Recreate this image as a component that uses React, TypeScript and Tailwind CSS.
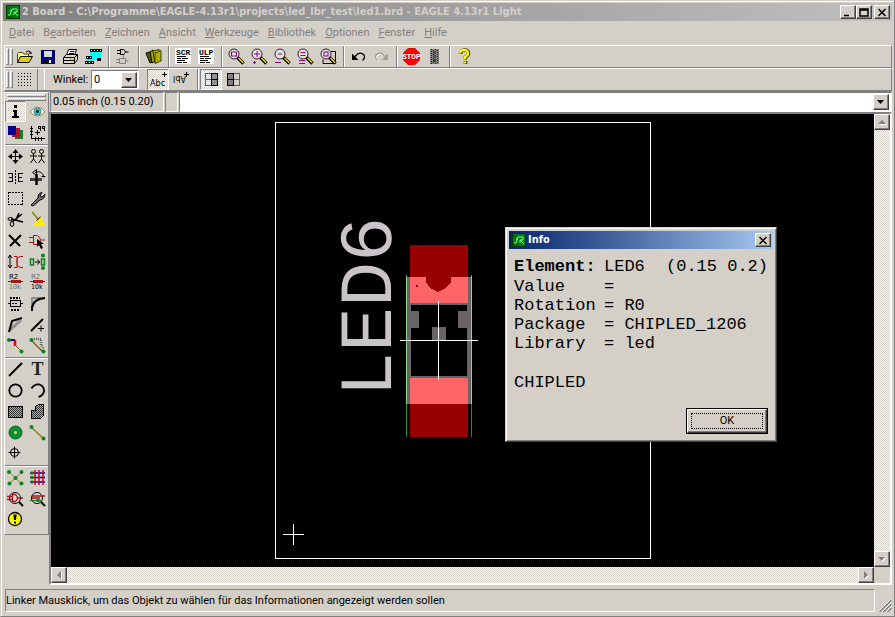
import type { ReactNode } from "react";

const RAISED =
  "bg-[#d4d0c8] border border-t-white border-l-white border-b-[#404040] border-r-[#404040] shadow-[inset_-1px_-1px_0_#808080]";
const DITHER =
  "bg-[repeating-conic-gradient(#ffffff_0_25%,#d4d0c8_0_50%)] bg-[length:2px_2px]";

function Icon({ children, smooth }: { children: ReactNode; smooth?: boolean }) {
  return (
    <svg
      width="17"
      height="17"
      viewBox="0 0 17 17"
      fill="none"
      stroke="#000"
      shapeRendering={smooth ? "auto" : "crispEdges"}
      aria-hidden="true"
      className="shrink-0 overflow-visible"
    >
      {children}
    </svg>
  );
}

function Logo() {
  return (
    <svg width="14" height="14" viewBox="0 0 14 14" aria-hidden="true" className="shrink-0">
      <rect width="14" height="14" fill="#003c00" />
      <rect x="1" y="1" width="12" height="12" fill="#007a18" />
      <path d="M2 10h2l2-6M4 6h2M6 4h5v3H8l4 4M8 7v3" stroke="#7dff7d" fill="none" />
      <path d="M1 12h6M1 3h3" stroke="#004d00" />
    </svg>
  );
}

/* ---------- magnifier family ---------- */
function Lens({ children }: { children?: ReactNode }) {
  return (
    <Icon smooth>
      <circle cx="6" cy="6" r="5" stroke="#302030" fill="#e6e2e0" />
      {children}
      <path d="M9.500 9.500l6 6" stroke="#000" strokeWidth="3.400" />
      <path d="M10.500 10l4.700 4.700" stroke="#f0e000" strokeWidth="1.500" />
    </Icon>
  );
}

const folder = (
  <Icon smooth>
    <path d="M1.500 14V5.500l1-1h4l1 1.500h5V8.500" fill="#ffff9c" stroke="#504800" />
    <path d="M1.500 14.500l3-6h12l-3.500 6z" fill="#e0d000" />
    <path d="M10 4q2.500-2.500 5 0.500v1.500M13 5h2.500" />
  </Icon>
);
const disk = (
  <Icon>
    <rect x="2.500" y="2.500" width="13" height="13" fill="#0000a0" stroke="#000040" />
    <rect x="5" y="3" width="8" height="6" fill="#d8d8d8" stroke="none" />
    <rect x="5" y="11" width="8" height="5" fill="#101010" stroke="none" />
    <rect x="10" y="12" width="2" height="3" fill="#fff" stroke="none" />
  </Icon>
);
const printer = (
  <Icon smooth>
    <path d="M4.500 7.500l2-6h8l-2 6" fill="#fff" />
    <path d="M1.500 9.500l3-3h11v5l-3 4h-11z" fill="#d8d8d8" />
    <path d="M1.500 9.500h11v6M12.500 9.500l3-3M2 12.500h10M8 3.500h4.500M7 5.500h5" />
    <path d="M7 11h4" stroke="#e0c000" />
  </Icon>
);
const boardSwitch = (
  <Icon>
    <path d="M5 2h11v7H9v7H2V8h3z" fill="#00ffff" stroke="none" />
    <rect x="5" y="4" width="11" height="8" fill="#00ffff" stroke="none" />
    <path d="M5 2.500h12M0 14.500h9" strokeWidth="3" />
    <path d="M1 9.500h6M12 11.500h4" strokeWidth="3" />
    <path d="M6 2.500h10M1 14.500h8M2 9.500h4" stroke="#fff" strokeDasharray="1 2" />
  </Icon>
);
const gates = (
  <Icon smooth>
    <path d="M5.500 1.500h3q4 2.500 0 5h-3zM2 2.500h3M2 5.500h3M10.500 4h3" />
    <path d="M4.500 10.500h6v5h-6zM1 11.500h3M1 14.500h3M10.500 13h3" stroke="#808080" />
    <path d="M8.500 7v3" stroke="#808080" />
  </Icon>
);
const books = (
  <Icon smooth>
    <path d="M1 5l4-1 3 10-3 1z" fill="#606000" />
    <path d="M5 4l3-2 2 11-3 2z" fill="#a0a000" />
    <path d="M8 3l6-1.500 2 1.500v10l-6 2.500z" fill="#b0ac00" stroke="#404000" />
    <path d="M10 5v10M10 5l5-2" stroke="#404000" />
  </Icon>
);

function Sheet({ label }: { label: string }) {
  return (
    <Icon>
      <rect x="0" y="0" width="16" height="16" fill="#fff" stroke="none" />
      <text x="1" y="7" fontSize="8" fontWeight="bold" fill="#000" stroke="none" fontFamily="Liberation Mono, monospace">
        {label}
      </text>
      <path d="M2 8.500h9M2 10.500h4M7 10.500h6M2 12.500h8M2 14.500h5M8 14.500h4" />
    </Icon>
  );
}

const undo = (
  <Icon smooth>
    <path d="M5 8.500q5-6 9-1.500q1.500 3-1.500 5.500" strokeWidth="1.300" />
    <path d="M2 5.500v6.500h6.500z" fill="#000" stroke="none" />
  </Icon>
);
const redo = (
  <Icon smooth>
    <path d="M13 9.500q-5-6-9-1.500q-1.500 3 1.500 5.500" stroke="#fff" strokeWidth="1.300" />
    <path d="M12 8.500q-5-6-9-1.500q-1.500 3 1.500 5.500" stroke="#a09c98" strokeWidth="1.300" />
    <path d="M15 5.500v6.500H8.500z" fill="#a09c98" stroke="none" />
  </Icon>
);
const stop = (
  <Icon smooth>
    <path d="M5 0h7l5 5v7l-5 5H5l-5-5V5z" fill="#f80000" stroke="none" />
    <text x="8.500" y="11" textAnchor="middle" fontSize="7" fontWeight="bold" fill="#fff" stroke="none" fontFamily="Roboto, sans-serif">
      STOP
    </text>
  </Icon>
);
const traffic = (
  <Icon>
    <rect x="4" y="1" width="9" height="15" fill="#808080" stroke="none" />
    <path d="M5.500 1v15M7.500 2v14M9.500 1v15M11.500 2v14" stroke="#202020" strokeDasharray="1 1" />
    <path d="M7 4.500h3M7 8.500h3" stroke="#505050" strokeWidth="3" />
    <path d="M7 12.500h3" stroke="#106010" strokeWidth="3" />
  </Icon>
);
const help = (
  <Icon smooth>
    <path d="M4.500 6q0-4 4-4t4 3.500q0 2-3 3.500v2.500M9.500 13v3" stroke="#404000" strokeWidth="3.600" />
    <path d="M4 5.500q0-3.500 4-3.500t4 3.500q0 2-3 3.500v2M9 13.500v2" stroke="#ffff00" strokeWidth="2.400" />
  </Icon>
);

const fileTools: [string, ReactNode][][] = [
  [["Öffnen", folder], ["Speichern", disk], ["Drucken", printer], ["CAM", boardSwitch]],
  [["Schaltplan", gates]],
  [["Bibliothek", books]],
  [["Skript", <Sheet label="SCR" />], ["ULP", <Sheet label="ULP" />]],
  [
    ["Einpassen", <Lens><rect x="3.500" y="4" width="5" height="4" stroke="#800080" fill="none" /></Lens>],
    ["Vergrößern", <Lens><path d="M6 3v6M3 6h6M2 14.500h3M3.500 13v3" stroke="#a00090" /></Lens>],
    ["Verkleinern", <Lens><path d="M4 6h4M1 14.500h6" stroke="#800080" /></Lens>],
    ["Neu zeichnen", <Lens><path d="M3.500 4.500h5M3.500 7.500h5M2 12.500h6M2 15.500h6" stroke="#a00070" /></Lens>],
    ["Auswahl", <Lens><path d="M11 3.500h4.500v12H3v-4" stroke="#000" /><rect x="4" y="4" width="4" height="4" stroke="#800080" fill="none" /></Lens>],
  ],
  [["Rückgängig", undo], ["Wiederherstellen", redo]],
  [["Stopp", stop], ["Ausführen", traffic]],
  [["Hilfe", help]],
];

/* ---------- tool palette ---------- */
const green = "#108020";
const red = "#a01818";

function ValueMark({ upper, lower }: { upper: string; lower: string }) {
  return (
    <Icon>
      <text x="2" y="5" fontSize="7" fill={upper} stroke="none" fontFamily="DejaVu Sans, sans-serif">R2</text>
      <path d="M1 7.500h15M4 6.500h9v2H4z" stroke={red} />
      <text x="2" y="15" fontSize="7" fill={lower} stroke="none" fontFamily="DejaVu Sans Condensed, sans-serif">10k</text>
    </Icon>
  );
}

const palette: [string, ReactNode][][] = [
  [
    ["Info", <Icon><path d="M7 2h3v3H7zM6 7h4v6h2v2H5v-2h2V9H6z" fill="#000" stroke="none" /></Icon>],
    ["Show", <Icon smooth>
      <path d="M1 9q7.500-10 15 0q-7.500 8-15 0z" fill="#fff" stroke="#a08030" />
      <circle cx="8.500" cy="8.500" r="3.500" fill="#20d0d8" stroke="#308890" /><circle cx="8.500" cy="8.500" r="1.500" fill="#000" stroke="none" />
    </Icon>],
    ["Display", <Icon>
      <rect x="8" y="6" width="8" height="9" fill="#207828" stroke="none" />
      <rect x="5" y="4" width="8" height="9" fill="#b01030" stroke="none" />
      <rect x="1" y="2" width="8" height="9" fill="#000090" stroke="none" />
    </Icon>],
    ["Mark", <Icon>
      <path d="M2.500 2v13M2 14.500h14M1 4.500h3M1 7.500h3M1 10.500h3M6.500 13v4M9.500 13v4M12.500 13v4M6 8.500h5M8.500 6v5" />
      <path d="M9.500 2.500h2v2h-2zM13.500 2.500h2v2h-2zM11.500 4v3M15.500 4v3" />
    </Icon>],
  ],
  [
    ["Move", <Icon smooth>
      <path d="M8.500 2v13M2 8.500h13" /><path d="M8.500 1l3 4h-6zM8.500 16l3-4h-6zM1 8.500l4-3v6zM16 8.500l-4-3v6z" fill="#000" stroke="none" />
    </Icon>],
    ["Copy", <Icon smooth>
      <circle cx="4.500" cy="3.500" r="2" /><path d="M4.500 6v5l-3 4M4.500 11l3 4M1 8h7" />
      <circle cx="12.500" cy="3.500" r="2" /><path d="M12.500 6v5l-3 4M12.500 11l3 4M9 8h7" />
    </Icon>],
    ["Mirror", <Icon>
      <path d="M1 4.500h4.500v8H1M2 8.500h3M16 4.500h-4.500v8H16M12 8.500h3" /><path d="M8.500 1v15" strokeDasharray="2 1" />
    </Icon>],
    ["Rotate", <Icon smooth>
      <path d="M1 10.500h12" strokeWidth="3" stroke="#404040" /><path d="M7.500 5v11" strokeWidth="2.500" />
      <path d="M6 3.500q7-3 9 5" /><path d="M3.500 3.500l4-3v6zM12.500 7.500h4" />
    </Icon>],
    ["Group", <Icon><rect x="1.500" y="2.500" width="14" height="12" strokeDasharray="2 1" /></Icon>],
    ["Change", <Icon smooth>
      <path d="M2 15l7-7q-1-4 4-6l-2 4 2 1 3-3q0 5-5 6l-7 6z" fill="#707070" />
    </Icon>],
    ["Cut", <Icon smooth>
      <path d="M5 11L15 3M4 8l12 3M9 9l3-7" strokeWidth="1.600" /><ellipse cx="3.500" cy="8" rx="2.500" ry="1.500" /><ellipse cx="5" cy="13" rx="1.800" ry="2.500" />
    </Icon>],
    ["Paste", <Icon smooth>
      <path d="M3 1l7 8" strokeWidth="1.300" stroke="#808000" /><path d="M8 9l4-3 4 8-13 1z" fill="#fff000" stroke="none" /><path d="M7.500 9.500l4-3.500" />
    </Icon>],
    ["Delete", <Icon smooth><path d="M2 3l11 11M14 3L3 14" strokeWidth="2" /></Icon>],
    ["Add", <Icon smooth>
      <path d="M4.500 3.500h4q6 5 0 9h-4zM0 5.500h4M0 10.500h4M12 8h4" stroke={red} /><path d="M8 7l7 5-3 0 2 4-2 1-2-4-2 2z" fill="#000" stroke="none" />
    </Icon>],
    ["Pinswap", <Icon smooth>
      <path d="M3 3v11M1 5l2-3 2 3M1 12l2 3 2-3" /><path d="M7 3.500h3v11H7M16 3.500h-3q-3 1-3 3v4q0 3 3 4h3" stroke={red} />
    </Icon>],
    ["Replace", <Icon smooth>
      <rect x="1.500" y="6" width="3" height="6" stroke={green} strokeWidth="1.500" /><path d="M6 9h5M8.500 6.500l2 2.500-2 2.500" />
      <rect x="12.500" y="6" width="3" height="6" stroke={green} strokeWidth="1.500" /><circle cx="14" cy="2.500" r="2" fill={green} stroke="none" /><circle cx="14" cy="15" r="2" fill={green} stroke="none" />
    </Icon>],
    ["Name", <ValueMark upper="#000" lower="#707070" />],
    ["Value", <ValueMark upper="#707070" lower="#000" />],
    ["Smash", <Icon>
      <rect x="3.500" y="5.500" width="10" height="6" /><path d="M3 2.500h10M4 14.500h9" strokeWidth="2" strokeDasharray="2 1" /><path d="M5 8.500h6M1 8.500h2M14 8.500h2" strokeDasharray="2 1" />
    </Icon>],
    ["Miter", <Icon smooth>
      <path d="M3 14V3h12" stroke="#909090" strokeWidth="2" /><path d="M3 16v-3q1-9 13-10" strokeWidth="2" />
    </Icon>],
    ["Split", <Icon smooth>
      <path d="M3 14L14 4" stroke="#909090" strokeWidth="3" /><path d="M2 16L5 5l10-3" strokeWidth="2" />
    </Icon>],
    ["Optimize", <Icon smooth><path d="M2 15L14 3" strokeWidth="2" /><path d="M9 12.500h6M12 9.500v6" /></Icon>],
    ["Route", <Icon smooth>
      <path d="M2 3h6" stroke="#0000e0" strokeWidth="2" /><path d="M8 3v6" stroke="#e00000" strokeWidth="2.500" /><path d="M8 8l6 6" stroke="#806020" />
      <circle cx="2" cy="3" r="2" fill={green} stroke="none" /><circle cx="14.500" cy="14.500" r="2" fill={green} stroke="none" />
    </Icon>],
    ["Ripup", <Icon smooth>
      <path d="M5 2h7v6l3 4" stroke="#606060" strokeWidth="2.500" strokeDasharray="1 1" /><path d="M2 3l12 12" stroke="#806020" strokeWidth="1.500" />
      <circle cx="2.500" cy="3" r="2" fill={green} stroke="none" /><circle cx="14.500" cy="14.500" r="2" fill={green} stroke="none" />
    </Icon>],
  ],
  [
    ["Wire", <Icon smooth><path d="M2 15L15 2" strokeWidth="2" /></Icon>],
    ["Text", <Icon smooth>
      <text x="8.500" y="14" textAnchor="middle" fontSize="18" fontWeight="bold" fill="#202020" stroke="none" fontFamily="Liberation Serif, serif">T</text>
    </Icon>],
    ["Circle", <Icon smooth><circle cx="8.500" cy="8.500" r="6.200" strokeWidth="1.800" /></Icon>],
    ["Arc", <Icon smooth><path d="M2.500 6.500q3-5 8-4q5 2 4.500 7q-1 4-5.500 5.500" strokeWidth="1.800" /></Icon>],
    ["Rect", <Icon><rect x="1.500" y="3.500" width="14" height="11" fill="url(#hatch)" /></Icon>],
    ["Polygon", <Icon><path d="M2.500 15.500v-8h4v-4l3-2h5v11l-3 3z" fill="url(#hatch)" /></Icon>],
    ["Via", <Icon smooth><circle cx="8.500" cy="8.500" r="6.500" fill="#10902c" stroke="#106020" /><circle cx="8.500" cy="8.500" r="1.500" fill="#b0e0b0" stroke="none" /></Icon>],
    ["Signal", <Icon smooth>
      <path d="M2 3l12 11" stroke="#908020" strokeWidth="1.500" /><circle cx="2.500" cy="3" r="2" fill={green} stroke="none" /><circle cx="14.500" cy="14.500" r="2" fill={green} stroke="none" />
    </Icon>],
    ["Hole", <Icon smooth><circle cx="7.500" cy="7.500" r="4" /><path d="M7.500 1.500v12M1.500 7.500h12" /></Icon>],
  ],
  [
    ["Ratsnest", <Icon smooth>
      <path d="M2 3l13 12M15 3L2 15" stroke="#908020" />
      {[[2, 3], [14.5, 3], [8.5, 9], [2.5, 14.5], [14.5, 14.5]].map(([x, y]) => (
        <circle key={`${x}-${y}`} cx={x} cy={y} r="2" fill={green} stroke="none" />
      ))}
    </Icon>],
    ["Auto", <Icon smooth>
      <path d="M1 4h15M1 8.500h15M1 13h15" stroke="#0000c0" strokeWidth="1.500" /><path d="M6 1v15M10 1v15M14 1v15" stroke="#d00020" strokeWidth="1.500" />
      {[4, 8.5, 13].map((y) => <circle key={y} cx="3" cy={y} r="1.700" fill={green} stroke="none" />)}
    </Icon>],
    ["ERC", <Icon smooth>
      <circle cx="8" cy="8" r="5.500" fill="#e0dcd8" /><path d="M5.500 4.500h3q4 3.500 0 7h-3zM0 6.500h5M0 9.500h5M11 8h5" stroke={red} strokeWidth="1.300" /><path d="M12 12l4 4" strokeWidth="2" />
    </Icon>],
    ["DRC", <Icon smooth>
      <circle cx="8" cy="8" r="5.500" fill="#e0dcd8" /><path d="M3 6h13M3 8h8" stroke={red} strokeWidth="1.500" /><path d="M1 10.500h12" stroke={green} strokeWidth="1.300" /><circle cx="9" cy="10.500" r="1.800" fill={green} stroke="none" /><path d="M12 12l4 4" strokeWidth="2" />
    </Icon>],
    ["Errors", <Icon smooth>
      <circle cx="8" cy="8" r="6.500" fill="#ffff00" strokeWidth="1.300" /><path d="M6.300 3.500h3.400l-.7 5.500H7z" fill="#000" stroke="none" /><rect x="7" y="10.500" width="2" height="2" fill="#000" stroke="none" />
    </Icon>],
  ],
];

function Grip() {
  return (
    <div className="ml-px flex gap-px py-0.5">
      <span className="w-[3px] border border-t-white border-l-white border-r-[#808080] border-b-[#808080]" />
      <span className="w-[3px] border border-t-white border-l-white border-r-[#808080] border-b-[#808080]" />
    </div>
  );
}

function ToolSeparator() {
  return (
    <span className="flex w-[7px] justify-center self-stretch">
      <span className="w-0.5 border-l border-l-[#808080] border-r border-r-white" />
    </span>
  );
}

const arrowPaths = { up: "M0 4L4 0L8 4z", down: "M0 0H7L3.5 4z", left: "M4 0V8L0 4z", right: "M0 0V8L4 4z" };

function ArrowButton({ dir, label, dim }: { dir: keyof typeof arrowPaths; label: string; dim?: boolean }) {
  return (
    <button aria-label={label} className={`flex size-4 shrink-0 items-center justify-center ${RAISED}`}>
      <svg width="8" height="8" viewBox={dir === "left" || dir === "right" ? "-2 0 8 8" : "0 -2 8 8"} aria-hidden="true">
        {dim && <path d={arrowPaths[dir]} fill="#fff" transform="translate(1 1)" />}
        <path d={arrowPaths[dir]} fill={dim ? "#808080" : "#000"} />
      </svg>
    </button>
  );
}

function CaptionButton({ label, path, wide }: { label: string; path: string; wide?: boolean }) {
  return (
    <button aria-label={label} className={`flex h-3.5 items-center justify-center ${wide ? "ml-0.5" : ""} w-4 ${RAISED}`}>
      <svg width="10" height="9" viewBox="0 0 10 9" fill="none" stroke="#000" aria-hidden="true">
        <path d={path} strokeWidth="1.500" />
      </svg>
    </button>
  );
}

const menus: [string, string, string][] = [
  ["", "D", "atei"],
  ["B", "e", "arbeiten"],
  ["", "Z", "eichnen"],
  ["", "A", "nsicht"],
  ["", "W", "erkzeuge"],
  ["", "B", "ibliothek"],
  ["", "O", "ptionen"],
  ["", "F", "enster"],
  ["", "H", "ilfe"],
];

function Drawing() {
  return (
    <svg className="block h-full w-full" shapeRendering="crispEdges" role="img" aria-label="Board">
      <g transform="translate(-51 -114)">
        <rect x="275.500" y="122.500" width="375" height="436" fill="none" stroke="#fff" />
        <rect x="407" y="277" width="65" height="127" fill="#686468" />
        <rect x="410" y="245" width="58" height="192" fill="#980000" />
        <rect x="410" y="277" width="58" height="127" fill="#ff6468" />
        <rect x="410" y="303" width="58" height="75" fill="#686468" />
        <rect x="411" y="305" width="56" height="71" fill="#000" />
        <path d="M426 277v5l4 6 8 4 8-4 5-6v-5z" fill="#980000" />
        <rect x="416" y="285" width="2" height="2" fill="#980000" />
        <path d="M410 311h9v17h-9zM458 311h10v17h-10zM432 327h14v13h-14z" fill="#686468" />
        <path d="M406.500 275v162M471.500 275v162" stroke="#189028" />
        <path d="M406.500 276v128M471.500 276v128" stroke="#80e080" />
        <path d="M400 340.500h78M438.500 301v79M283 534.500h21M293.500 524v21" stroke="#fff" />
        <text
          transform="translate(391 397) rotate(-90)"
          fontSize="75"
          fill="#c8c4c8"
          fontFamily="Liberation Mono, monospace"
          textRendering="geometricPrecision"
        >
          LED6
        </text>
      </g>
    </svg>
  );
}

const facts = [
  ["Value", ""],
  ["Rotation", "R0"],
  ["Package", "CHIPLED_1206"],
  ["Library", "led"],
];

function InfoDialog() {
  return (
    <section
      role="dialog"
      aria-label="Info"
      className="absolute top-[226px] left-[504px] flex w-[272px] flex-col border border-t-[#d4d0c8] border-l-[#d4d0c8] border-r-[#404040] border-b-[#404040] bg-[#d4d0c8] p-[3px] shadow-[inset_1px_1px_0_#fff,inset_-1px_-1px_0_#808080]"
    >
      <header className="flex h-[18px] items-center gap-0.5 bg-linear-to-r from-[#0a246a] to-[#a6caf0] pr-0.5 pl-[3px] font-['DejaVu_Sans_Condensed','DejaVu_Sans',sans-serif] font-bold text-white">
        <Logo />
        <h2 className="flex-1">Info</h2>
        <CaptionButton label="Schließen" path="M1.500 1l7 7M8.500 1l-7 7" />
      </header>
      <div className="px-[5px] pt-2 font-['Liberation_Mono',monospace] text-[17px] leading-[19px]">
        <p className="mb-px grid grid-cols-[90px_62px_1fr] whitespace-nowrap">
          <b>Element:</b>
          <span>LED6</span>
          <span>(0.15 0.2)</span>
        </p>
        <dl className="grid grid-cols-[90px_1fr]">
          {facts.map(([name, value]) => (
            <div key={name} className="contents">
              <dt>{name}</dt>
              <dd>= {value}</dd>
            </div>
          ))}
        </dl>
        <p className="mt-5">CHIPLED</p>
      </div>
      <div className="mt-4 flex justify-end pr-[5px] pb-1">
        <button className="h-[26px] w-[82px] border border-black p-0">
          <span className={`flex h-full items-center justify-center p-[3px] ${RAISED}`}>
            <span className="flex h-full w-full items-center justify-center border border-dotted border-black">OK</span>
          </span>
        </button>
      </div>
    </section>
  );
}

export default function App() {
  return (
    <div className="relative flex h-screen w-full flex-col overflow-hidden border border-t-[#d4d0c8] border-l-[#d4d0c8] border-r-[#808080] border-b-[#808080] bg-[#d4d0c8] p-0.5 font-['Roboto',sans-serif] text-[11px] leading-[14px] text-black shadow-[inset_1px_1px_0_#fff]">
      <svg width="0" height="0" className="absolute" aria-hidden="true">
        <defs>
          <pattern id="hatch" width="2" height="2" patternUnits="userSpaceOnUse">
            <rect width="2" height="2" fill="#b0b0b0" />
            <path d="M0 0h1v1H0zM1 1h1v1H1z" fill="#303030" />
          </pattern>
        </defs>
      </svg>

      <header className="flex h-[18px] shrink-0 items-center bg-linear-to-r from-[#808080] to-[#c0c0c0] pr-0.5 pl-[3px] font-['DejaVu_Sans_Condensed','DejaVu_Sans',sans-serif] font-bold text-[#d4d0c8]">
        <Logo />
        <h1 className="ml-0.5 flex-1 truncate">2 Board - C:\Programme\EAGLE-4.13r1\projects\led_lbr_test\led1.brd - EAGLE 4.13r1 Light</h1>
        <CaptionButton label="Minimieren" path="M1 7.500h5" />
        <CaptionButton label="Maximieren" path="M1 1h8v7H1zM1 2h8" />
        <CaptionButton label="Schließen" path="M1.500 1l7 7M8.500 1l-7 7" wide />
      </header>

      <nav className="flex h-6 shrink-0 items-center gap-[9px] pl-1.5 text-[#808080]">
        {menus.map(([before, key, after]) => (
          <button key={key + after}>
            {before}
            <u>{key}</u>
            {after}
          </button>
        ))}
      </nav>

      <div className="ml-px flex h-[23px] shrink-0 items-stretch border border-t-white border-l-white border-r-[#808080] border-b-[#808080]">
        <Grip />
        {fileTools.map((group, i) => (
          <div key={i} className="flex items-center">
            {i > 0 && <ToolSeparator />}
            {group.map(([name, icon]) => (
              <button key={name} aria-label={name} className="flex w-[23px] justify-center">
                {icon}
              </button>
            ))}
          </div>
        ))}
      </div>

      <div className="ml-px flex h-6 shrink-0 items-stretch border border-t-white border-l-white border-r-[#808080] border-b-2 border-b-[#808080]">
        <Grip />
        <button aria-label="Raster" className="flex w-[22px] items-center justify-center">
          <Icon>
            {[2, 5, 8, 11, 14].map((y) => (
              <path key={y} d={`M2 ${y + 0.5}h13`} strokeDasharray="1 2" />
            ))}
          </Icon>
        </button>
        <span className="ml-0.5 w-2 border-x border-l-[#808080] border-r-white" />
        <label htmlFor="angle" className="ml-2 w-[38px] self-center whitespace-nowrap">
          Winkel:
        </label>
        <span className="my-px flex w-[48px] items-center border border-t-[#808080] border-l-[#808080] border-r-white border-b-white bg-white pr-px">
          <select id="angle" className="min-w-0 flex-1 appearance-none bg-transparent pl-0.5 outline-none">
            <option>0</option>
          </select>
          <ArrowButton dir="down" label="Winkel wählen" />
        </span>
        <button aria-label="Normal" className={`ml-2 flex w-[22px] items-center justify-center border border-t-[#808080] border-l-[#808080] border-r-white border-b-white ${DITHER}`}>
          <Icon>
            <text x="0" y="15" fontSize="9" fill="#000" stroke="none" fontFamily="DejaVu Sans Condensed, sans-serif">Abc</text>
            <path d="M12 3.500h5M14.500 1v5" />
          </Icon>
        </button>
        <button aria-label="Gespiegelt" className="flex w-[23px] items-center justify-center">
          <Icon>
            <text x="-14" y="-5" transform="rotate(180)" fontSize="9" fill="#000" stroke="none" fontFamily="DejaVu Sans Condensed, sans-serif">Abl</text>
            <path d="M12 3.500h5M14.500 1v5" />
          </Icon>
        </button>
        <span className="ml-[5px] w-0.5 border-l border-l-[#808080] border-r border-r-white" />
        <button aria-label="Rechts" className={`ml-px flex w-[22px] items-center justify-center border border-t-[#808080] border-l-[#808080] border-r-white border-b-white ${DITHER}`}>
          <Icon>
            <path d="M2.500 2.500h6v12h-6zM2 8.500h6" stroke="#606060" />
            <path d="M8.500 2.500h6v12h-6zM8 8.500h6" fill="#909090" />
          </Icon>
        </button>
        <button aria-label="Links" className="flex w-[23px] items-center justify-center">
          <Icon>
            <path d="M8.500 2.500h6v12h-6zM8 8.500h6" stroke="#606060" />
            <path d="M2.500 2.500h6v12h-6zM2 8.500h6" fill="#808080" />
          </Icon>
        </button>
      </div>

      <div className="flex min-h-0 flex-1">
        <aside className="ml-px flex w-[45px] shrink-0 flex-col self-start border border-t-white border-l-white border-r-[#808080] border-b-[#808080] pb-1">
          <div className="flex flex-col gap-px px-0.5 pt-px">
            <span className="h-[3px] border border-t-white border-l-white border-r-[#808080] border-b-[#808080]" />
            <span className="h-[3px] border border-t-white border-l-white border-r-[#808080] border-b-[#808080]" />
          </div>
          {palette.map((group, i) => (
            <div key={i} className={i > 0 ? "mt-px border-t border-t-[#808080] shadow-[inset_0_1px_0_#fff]" : ""}>
              <div className={`grid grid-cols-[21px_22px] auto-rows-[21px] ${i > 0 ? "pt-px" : ""}`}>
                {group.map(([name, icon]) => (
                  <button
                    key={name}
                    aria-label={name}
                    className={`flex items-center justify-center ${name === "Info" ? `border border-t-[#808080] border-l-[#808080] border-r-white border-b-white ${DITHER}` : ""}`}
                  >
                    {icon}
                  </button>
                ))}
              </div>
            </div>
          ))}
        </aside>

        <main className="flex min-w-0 flex-1 flex-col">
          <div className="flex h-5 shrink-0 gap-px pl-px">
            <output className="flex w-[114px] items-center border border-t-[#808080] border-l-[#808080] border-r-white border-b-white pl-0.5 whitespace-nowrap">
              0.05 inch (0.15 0.20)
            </output>
            <span className="w-[13px] border border-t-[#808080] border-l-[#808080] border-r-white border-b-white" />
            <div className="flex flex-1 items-center border border-t-[#808080] border-l-[#808080] border-r-white border-b-white bg-white pr-0.5">
              <input aria-label="Befehl" className="min-w-0 flex-1 bg-transparent px-1 outline-none" />
              <ArrowButton dir="down" label="Verlauf" />
            </div>
          </div>
          <div className="grid min-h-0 flex-1 grid-cols-[1fr_16px] grid-rows-[1fr_16px] border-2 border-t-[#808080] border-l-[#808080] border-r-white border-b-white">
            <div className="min-h-0 min-w-0 overflow-hidden bg-black">
              <Drawing />
            </div>
            <div className={`flex flex-col justify-between ${DITHER}`}>
              <ArrowButton dir="up" label="Nach oben" dim />
              <ArrowButton dir="down" label="Nach unten" dim />
            </div>
            <div className={`flex justify-between ${DITHER}`}>
              <ArrowButton dir="left" label="Nach links" dim />
              <ArrowButton dir="right" label="Nach rechts" dim />
            </div>
          </div>
        </main>
      </div>

      <footer className="flex h-[29px] shrink-0 items-stretch pt-1 pb-0.5 pl-0.5">
        <p className="flex flex-1 items-center border border-t-[#808080] border-l-[#808080] border-r-white border-b-white">
          Linker Mausklick, um das Objekt zu wählen für das Informationen angezeigt werden sollen
        </p>
        <svg width="17" height="14" viewBox="0 0 17 14" aria-hidden="true" className="self-end">
          <path d="M4 14L16 2M8 14l8-8M12 14l4-4" stroke="#808080" strokeWidth="2" />
          <path d="M3 14L16 1M7 14l9-9M11 14l5-5" stroke="#fff" />
        </svg>
      </footer>

      <InfoDialog />
    </div>
  );
}
